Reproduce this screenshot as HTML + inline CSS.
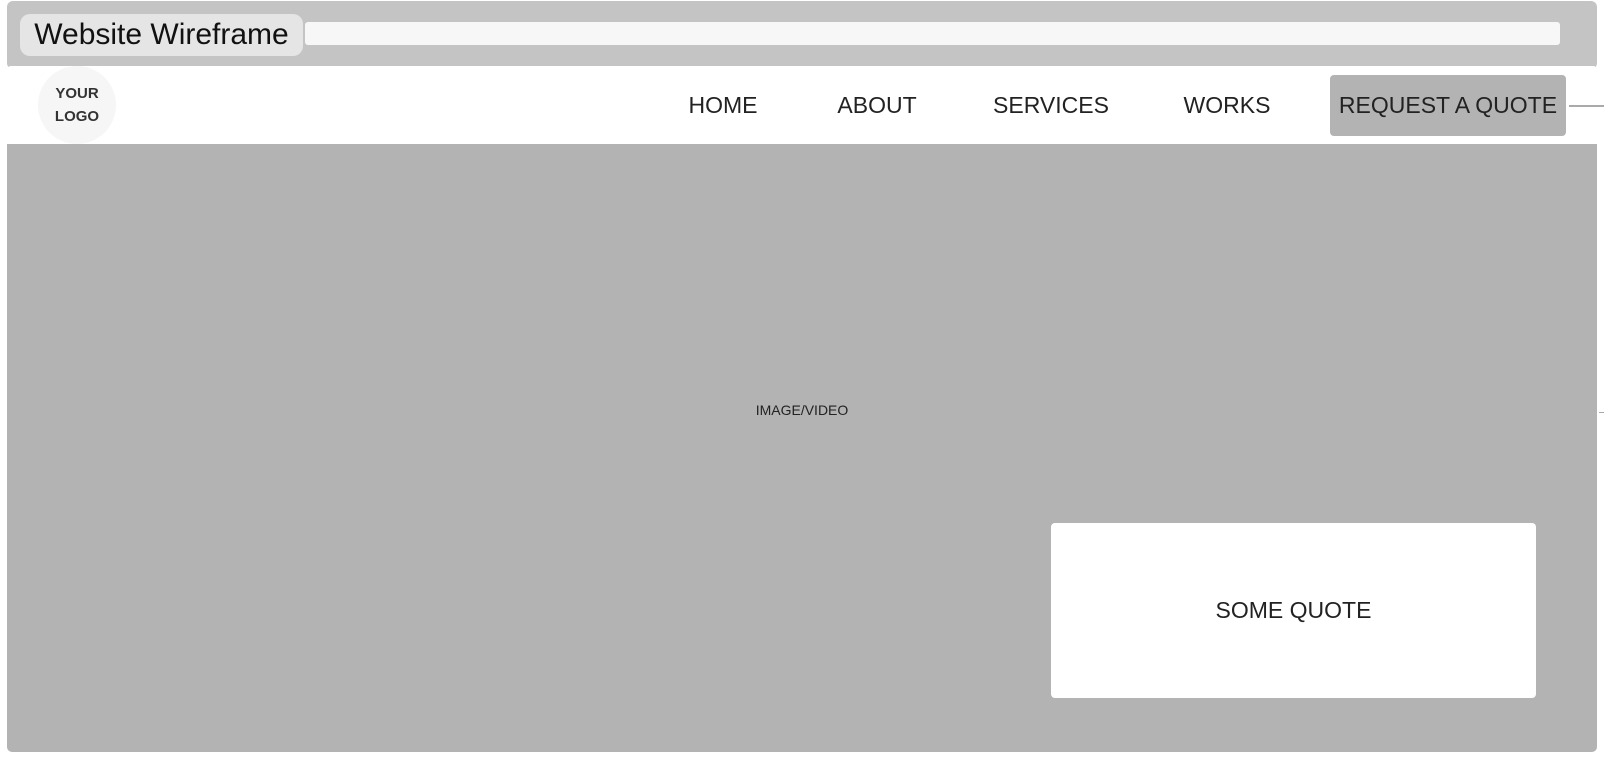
<!DOCTYPE html>
<html><head><style>
body{margin:0;width:1604px;height:760px;background:#fff;position:relative;font-family:"Liberation Sans",sans-serif;overflow:hidden}
div{position:absolute;box-sizing:border-box}
.c{display:flex;align-items:center;justify-content:center}
.n{font-size:23px;color:#222;top:92px;transform:translateX(-50%);white-space:nowrap}
</style></head><body>
<div style="left:7px;top:1px;width:1590px;height:68px;background:#c4c4c4;border-radius:6px"></div>
<div style="left:305px;top:22px;width:1255px;height:23px;background:#f7f7f7;border-radius:3px"></div>
<div class="c" style="left:20px;top:14px;width:283px;height:42px;background:#e5e5e5;border-radius:10px;font-size:30px;color:#111;white-space:nowrap">Website Wireframe</div>
<div style="left:7px;top:66px;width:1590px;height:80px;background:#fff;border-radius:4px"></div>
<div class="c" style="left:38px;top:66px;width:78px;height:78px;border-radius:50%;background:#f6f6f6;font-size:15px;font-weight:bold;color:#333;text-align:center;line-height:23px">YOUR<br>LOGO</div>
<div class="n" style="left:723px">HOME</div>
<div class="n" style="left:877px">ABOUT</div>
<div class="n" style="left:1051px">SERVICES</div>
<div class="n" style="left:1227px">WORKS</div>
<div class="c" style="left:1330px;top:75px;width:236px;height:61px;background:#b3b3b3;border-radius:4px;font-size:23px;color:#222;white-space:nowrap">REQUEST A QUOTE</div>
<div style="left:1569px;top:105px;width:35px;height:2px;background:#aaa"></div>
<div style="left:7px;top:144px;width:1590px;height:608px;background:#b3b3b3;border-radius:0 0 5px 5px"></div>
<div style="left:702px;top:402px;width:200px;text-align:center;font-size:14px;color:#222">IMAGE/VIDEO</div>
<div style="left:1599px;top:412px;width:5px;height:1px;background:#aaa"></div>
<div class="c" style="left:1051px;top:523px;width:485px;height:175px;background:#fff;border-radius:4px;font-size:23px;color:#222">SOME QUOTE</div>
</body></html>
